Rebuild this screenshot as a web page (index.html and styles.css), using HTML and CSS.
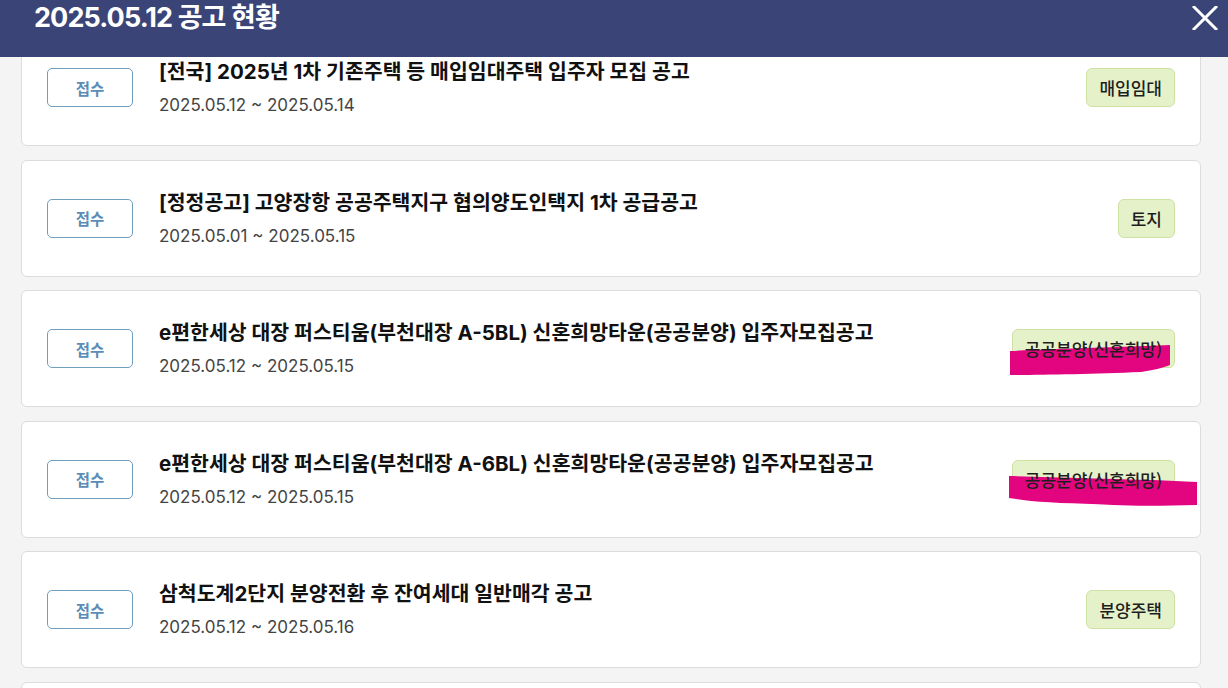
FILE: index.html
```html
<!DOCTYPE html>
<html lang="ko">
<head>
    <meta charset="UTF-8">
    <meta name="viewport" content="width=device-width, initial-scale=1.0">
    <title>공고 현황</title>
    <link rel="stylesheet" href="styles.css">
</head>
<body>

    <!-- 상단 고정 헤더 -->
    <div class="modal-header">
        <h1>2025.05.12 공고 현황</h1>
        <button class="close-btn" aria-label="닫기">
            <svg width="26" height="24" viewBox="0 0 26 24">
                <path d="M2 1 L24 23 M24 1 L2 23" stroke="#fff" stroke-width="3" stroke-linecap="square"/>
            </svg>
        </button>
    </div>

    <div class="notice-list">
        <div class="notice-card">
            <span class="status-btn">접수</span>
            <div class="notice-info">
                <div class="notice-title">[전국] 2025년 1차 기존주택 등 매입임대주택 입주자 모집 공고</div>
                <div class="notice-date">2025.05.12 ~ 2025.05.14</div>
            </div>
            <span class="type-badge"><span class="badge-text">매입임대</span></span>
        </div>

        <div class="notice-card">
            <span class="status-btn">접수</span>
            <div class="notice-info">
                <div class="notice-title">[정정공고] 고양장항 공공주택지구 협의양도인택지 1차 공급공고</div>
                <div class="notice-date">2025.05.01 ~ 2025.05.15</div>
            </div>
            <span class="type-badge"><span class="badge-text">토지</span></span>
        </div>

        <div class="notice-card">
            <span class="status-btn">접수</span>
            <div class="notice-info">
                <div class="notice-title">e편한세상 대장 퍼스티움(부천대장 A-5BL) 신혼희망타운(공공분양) 입주자모집공고</div>
                <div class="notice-date">2025.05.12 ~ 2025.05.15</div>
            </div>
            <span class="type-badge">
                <!-- 형광펜 표시 -->
                <svg class="marker" width="170" height="50" viewBox="0 0 170 50">
                    <path d="M-3 21 C40 19 100 17 132 16 L157 15 L157 35 C150 38 140 40 128 42 C80 44 30 45 -3 45 Z" fill="#e2057f"/>
                </svg>
                <span class="badge-text">공공분양(신혼희망)</span>
            </span>
        </div>

        <div class="notice-card">
            <span class="status-btn">접수</span>
            <div class="notice-info">
                <div class="notice-title">e편한세상 대장 퍼스티움(부천대장 A-6BL) 신혼희망타운(공공분양) 입주자모집공고</div>
                <div class="notice-date">2025.05.12 ~ 2025.05.15</div>
            </div>
            <span class="type-badge">
                <svg class="marker" width="190" height="50" viewBox="0 0 190 50">
                    <path d="M-4 15 C40 16 100 18 140 19 L184 21 L184 44 C150 45 120 45 100 44 C60 42 30 42 10 39 L-4 37 Z" fill="#e2057f"/>
                </svg>
                <span class="badge-text">공공분양(신혼희망)</span>
            </span>
        </div>

        <div class="notice-card">
            <span class="status-btn">접수</span>
            <div class="notice-info">
                <div class="notice-title">삼척도계2단지 분양전환 후 잔여세대 일반매각 공고</div>
                <div class="notice-date">2025.05.12 ~ 2025.05.16</div>
            </div>
            <span class="type-badge"><span class="badge-text">분양주택</span></span>
        </div>

        <!-- 다음 항목 (화면 아래로 잘림) -->
        <div class="notice-card"></div>
    </div>

</body>
</html>
```

FILE: styles.css
```css
body {
    font-family: Inter, "Noto Sans CJK KR", sans-serif;
    background-color: #f4f4f4;
    margin: 0;
    overflow: hidden;
}
.modal-header {
    position: fixed;
    top: 0;
    left: 0;
    right: 0;
    height: 57px;
    background-color: #3b4477;
    z-index: 10;
}
.modal-header h1 {
    margin: 0;
    padding: 1px 0 0 34px;
    color: white;
    font-size: 27px;
    font-weight: 700;
    line-height: 34px;
    letter-spacing: -0.9px;
}
.close-btn {
    position: absolute;
    top: 6px;
    right: 10px;
    padding: 0;
    background: none;
    border: none;
    cursor: pointer;
}
.notice-list {
    display: flex;
    flex-direction: column;
    gap: 13.5px;
    padding: 29px 27px 0 21px;
}
.notice-card {
    display: flex;
    align-items: center;
    height: 117px;
    box-sizing: border-box;
    padding: 0 25px;
    background: white;
    border: 1px solid #dcdcdc;
    border-radius: 6px;
    flex-shrink: 0;
}
.status-btn {
    display: flex;
    align-items: center;
    justify-content: center;
    width: 86px;
    height: 39px;
    box-sizing: border-box;
    border: 1px solid #6f9ebf;
    border-radius: 5px;
    color: #5b8db6;
    font-size: 15.5px;
    font-weight: 600;
    flex-shrink: 0;
}
.notice-info {
    flex: 1;
    margin-left: 26px;
}
.notice-title {
    font-size: 20.5px;
    font-weight: 700;
    color: #111;
    line-height: 28px;
}
.notice-date {
    margin-top: 7px;
    font-size: 17px;
    color: #444;
    line-height: 24px;
}
.type-badge {
    position: relative;
    display: flex;
    align-items: center;
    height: 39px;
    box-sizing: border-box;
    padding: 0 12px;
    background-color: #e5f1c9;
    border: 1px solid #cfe0a4;
    border-radius: 6px;
    font-family: "Noto Sans CJK KR", sans-serif;
    font-size: 17px;
    font-weight: 500;
    color: #1e1e1e;
    flex-shrink: 0;
}
.badge-text {
    position: relative;
    z-index: 1;
}
.marker {
    position: absolute;
    left: 0;
    top: 0;
    overflow: visible;
}
```
